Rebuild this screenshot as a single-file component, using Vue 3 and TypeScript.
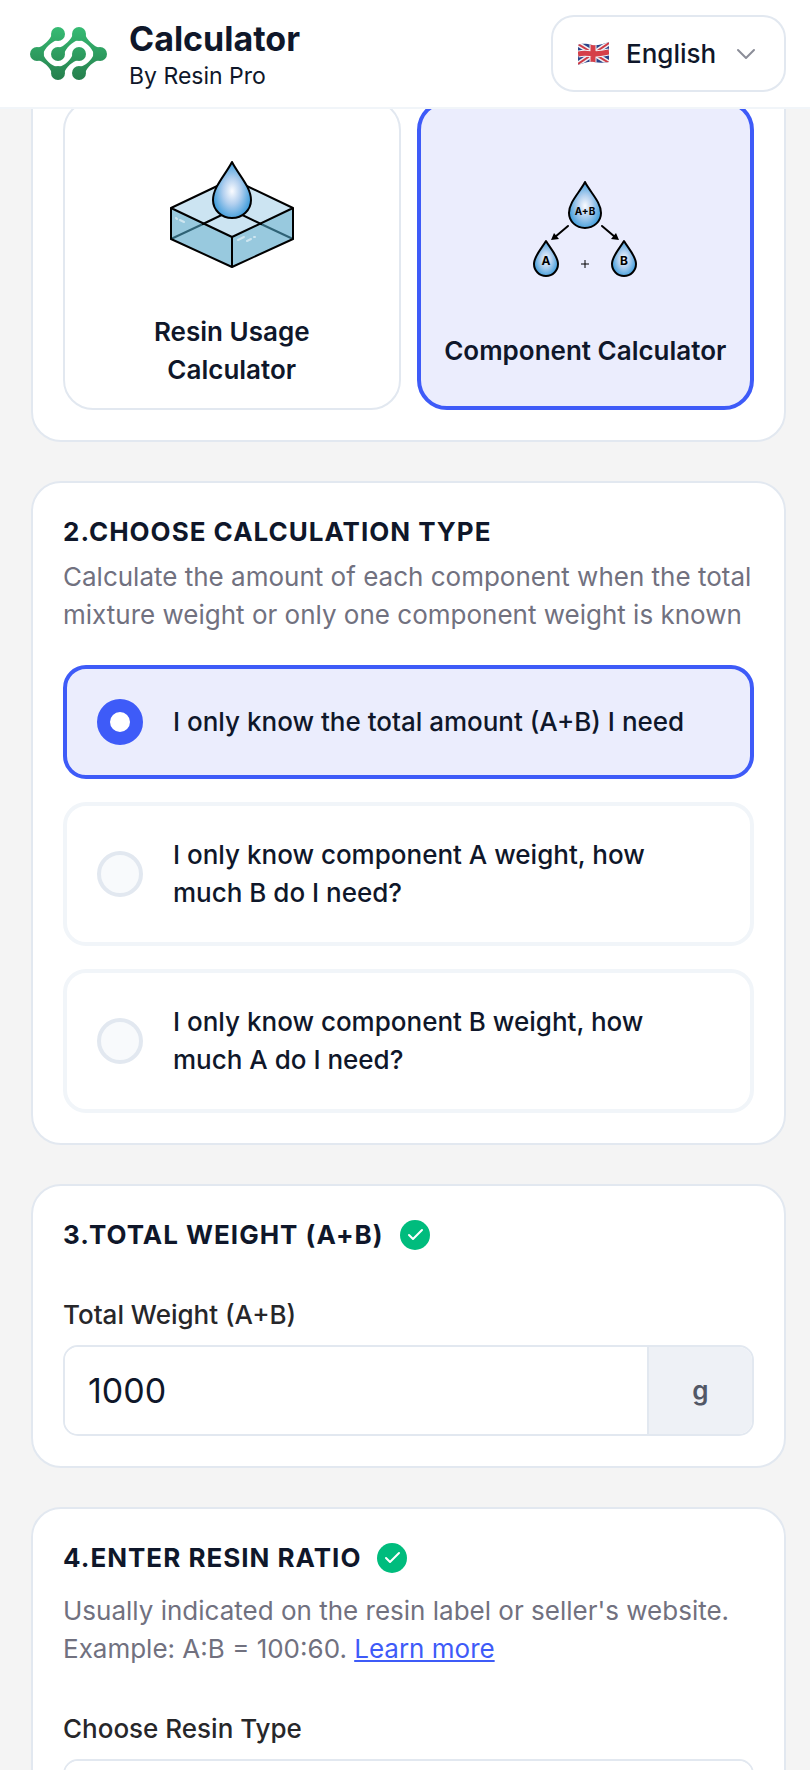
<script setup lang="ts">
import { ref } from 'vue'

type Point = [number, number]

interface CalculationType {
  id: string
  label: string
}

const language = ref('en')
const tool = ref<'usage' | 'component'>('component')
const calculation = ref('total')
const totalWeight = ref('1000')
const resinType = ref('')

const calculationTypes: CalculationType[] = [
  { id: 'total', label: 'I only know the total amount (A+B) I need' },
  { id: 'a', label: 'I only know component A weight, how much B do I need?' },
  { id: 'b', label: 'I only know component B weight, how much A do I need?' },
]

const nodes: Point[] = [
  [28, 7], [49, 7], [7, 27], [28, 27], [49, 27], [70, 27], [28, 46], [49, 46],
]
const links: [number, number][] = [[2, 0], [2, 6], [3, 1], [1, 5], [5, 7], [6, 4]]

// A link is wide where it meets its nodes and thin halfway.
function linkPath([from, to]: [number, number]): string {
  const [x1, y1] = nodes[from]
  const [x2, y2] = nodes[to]
  const length = Math.hypot(x2 - x1, y2 - y1)
  const dx = (x2 - x1) / length
  const dy = (y2 - y1) / length
  const at = (t: number, side: number) =>
    `${(x1 + dx * t - dy * side).toFixed(1)} ${(y1 + dy * t + dx * side).toFixed(1)}`
  return (
    `M${at(5, 4)} C${at(9, 1.2)} ${at(length - 9, 1.2)} ${at(length - 5, 4)} ` +
    `L${at(length - 5, -4)} C${at(length - 9, -1.2)} ${at(9, -1.2)} ${at(5, -4)}Z`
  )
}
</script>

<template>
  <div class="page">
    <header class="header">
      <a class="brand" href="#">
        <svg class="logo" viewBox="0 0 77 53" aria-hidden="true">
          <defs>
            <linearGradient id="logo-fill" gradientUnits="userSpaceOnUse" x1="0" y1="0" x2="0" y2="53">
              <stop offset="0" stop-color="#36bb73" />
              <stop offset="1" stop-color="#267f4d" />
            </linearGradient>
          </defs>
          <g fill="url(#logo-fill)">
            <path v-for="(link, i) in links" :key="`l${i}`" :d="linkPath(link)" />
            <circle v-for="(node, i) in nodes" :key="`n${i}`" :cx="node[0]" :cy="node[1]" r="7" />
          </g>
        </svg>
        <span class="brand-text">
          <span class="brand-name">Calculator</span>
          <span class="brand-by">By Resin Pro</span>
        </span>
      </a>
      <div class="language">
        <svg class="flag" viewBox="0 0 31 24" aria-hidden="true">
          <defs>
            <clipPath id="flag-shape">
              <path d="M0 3C5 1 9 2 14 3S25 2 31 0V20C26 21 21 21 16 20S6 21 0 23Z" />
            </clipPath>
          </defs>
          <g clip-path="url(#flag-shape)">
            <path fill="#2b4389" d="M0 0H31V24H0Z" />
            <path stroke="#f0eff3" stroke-width="5" d="M0 2 31 21M0 22 31 1" />
            <path stroke="#cf3b46" stroke-width="2" d="M0 2 31 21M0 22 31 1" />
            <path fill="none" stroke="#f0eff3" stroke-width="7" d="M0 12C8 10 12 12 16 12S25 11 31 10M15 0V24" />
            <path fill="none" stroke="#d53f49" stroke-width="5" d="M0 12C8 10 12 12 16 12S25 11 31 10M15 0V24" />
          </g>
        </svg>
        <select v-model="language" class="language-select" aria-label="Language">
          <option value="en">English</option>
        </select>
        <svg class="chevron" viewBox="0 0 20 12" aria-hidden="true">
          <path d="M2 2 10 10 18 2" />
        </svg>
      </div>
    </header>

    <main class="content">
      <section class="card tools">
        <button
          type="button"
          class="tool"
          :class="{ selected: tool === 'usage' }"
          :aria-pressed="tool === 'usage'"
          @click="tool = 'usage'"
        >
          <svg class="tool-art" viewBox="0 0 184 184" aria-hidden="true">
            <defs>
              <radialGradient id="drop-fill" cx="0.5" cy="0.52" r="0.52">
                <stop offset="0" stop-color="#fbfcff" />
                <stop offset="0.45" stop-color="#b3d0ef" />
                <stop offset="1" stop-color="#3f9ddb" />
              </radialGradient>
            </defs>
            <path fill="#cce4f2" d="M31 87 92 58 153 87 92 116Z" />
            <path fill="#98c9de" d="M31 87 92 116V146L31 118ZM153 87 92 116V146L153 118Z" />
            <path class="edge hidden-edge" d="M31 118 63 103M153 118 121 103" />
            <path class="edge" d="M63 103 92 89 121 103" />
            <path class="edge" d="M31 87 92 58 153 87V118L92 146 31 118V87L92 116 153 87M92 116V146" />
            <path class="shine" d="M36 97 37 98M40 99 44 101M98 119 104 116M107 120 111 118M114 116 115 116" />
            <path class="edge" fill="url(#drop-fill)" d="M92 41C98 53 111 66 111 79A19 18 0 0 1 73 79C73 66 86 53 92 41Z" />
          </svg>
          <span>Resin Usage Calculator</span>
        </button>
        <button
          type="button"
          class="tool"
          :class="{ selected: tool === 'component' }"
          :aria-pressed="tool === 'component'"
          @click="tool = 'component'"
        >
          <svg class="tool-art" viewBox="0 0 184 184" aria-hidden="true">
            <g class="edge">
              <path fill="url(#drop-fill)" d="M92 42C97 52 108 62 108 73A16 15 0 0 1 76 73C76 62 87 52 92 42Z" />
              <path fill="url(#drop-fill)" d="M53 101C57 108 65 116 65 124A12 12 0 0 1 41 124C41 116 49 108 53 101Z" />
              <path fill="url(#drop-fill)" d="M131 101C135 108 143 116 143 124A12 12 0 0 1 119 124C119 116 127 108 131 101Z" />
            </g>
            <path class="edge" d="M75 86 62 97M109 86 122 97" />
            <path class="plus" d="M88 124H96M92 120V128" />
            <path d="M58 100 61 93 66 99ZM126 100 123 93 118 99Z" />
            <text x="92" y="75" font-size="10">A+B</text>
            <text x="53" y="125" font-size="12">A</text>
            <text x="131" y="125" font-size="12">B</text>
          </svg>
          <span>Component Calculator</span>
        </button>
      </section>

      <section class="card">
        <h2 class="title">2.CHOOSE CALCULATION TYPE</h2>
        <p class="description">
          Calculate the amount of each component when the total mixture weight or only one component weight is known
        </p>
        <div class="options" role="radiogroup" aria-label="Calculation type">
          <label
            v-for="item in calculationTypes"
            :key="item.id"
            class="option"
            :class="{ selected: calculation === item.id }"
          >
            <input v-model="calculation" class="radio" type="radio" name="calculation" :value="item.id" />
            <span>{{ item.label }}</span>
          </label>
        </div>
      </section>

      <section class="card">
        <h2 class="title">
          3.TOTAL WEIGHT (A+B)
          <svg class="done" viewBox="0 0 30 30" aria-hidden="true">
            <circle cx="15" cy="15" r="15" />
            <path d="M9 15 13 19 22 10" />
          </svg>
        </h2>
        <label class="field-label" for="total-weight">Total Weight (A+B)</label>
        <div class="field">
          <input id="total-weight" v-model="totalWeight" class="field-input" type="text" inputmode="decimal" />
          <span class="unit">g</span>
        </div>
      </section>

      <section class="card">
        <h2 class="title">
          4.ENTER RESIN RATIO
          <svg class="done" viewBox="0 0 30 30" aria-hidden="true">
            <circle cx="15" cy="15" r="15" />
            <path d="M9 15 13 19 22 10" />
          </svg>
        </h2>
        <p class="description spaced">
          Usually indicated on the resin label or seller's website. Example: A:B = 100:60.
          <a class="link" href="#">Learn more</a>
        </p>
        <label class="field-label" for="resin-type">Choose Resin Type</label>
        <div class="field">
          <select id="resin-type" v-model="resinType" class="field-input"></select>
        </div>
      </section>
    </main>
  </div>
</template>

<style>
body {
  margin: 0;
  background: #f4f4f4;
}
</style>

<style scoped>
.page {
  height: 100vh;
  overflow-y: auto;
  scrollbar-width: none;
  background: #f4f4f4;
  color: #0f172a;
  font-family: Inter, "Liberation Sans", sans-serif;
  font-size: 26px;
  line-height: 38px;
}

.page *,
.page {
  box-sizing: border-box;
}

button,
select,
input {
  margin: 0;
  color: inherit;
  font: inherit;
}

.header {
  position: sticky;
  top: 0;
  z-index: 1;
  display: flex;
  align-items: center;
  justify-content: space-between;
  padding: 15px 24px 15px 30px;
  border-bottom: 2px solid #f1f5f9;
  background: #fff;
}

.brand {
  display: flex;
  align-items: center;
  gap: 22px;
  color: inherit;
  text-decoration: none;
}

.logo {
  width: 77px;
  height: 53px;
}

.brand-text {
  display: flex;
  flex-direction: column;
  padding-top: 2px;
}

.brand-name {
  font-size: 34px;
  font-weight: 700;
  line-height: 42px;
}

.brand-by {
  font-size: 23px;
  line-height: 32px;
}

.language {
  display: flex;
  align-items: center;
  width: 235px;
  height: 77px;
  padding: 0 28px 0 25px;
  border: 2px solid #e2e8f0;
  border-radius: 23px;
}

.flag {
  flex: none;
  width: 31px;
  height: 24px;
}

.language-select {
  flex: 1;
  min-width: 0;
  padding: 0 0 0 17px;
  border: 0;
  background: none;
  appearance: none;
  font-weight: 500;
}

.chevron {
  flex: none;
  width: 20px;
  height: 12px;
  fill: none;
  stroke: #8b8d98;
  stroke-width: 2;
  stroke-linecap: round;
  stroke-linejoin: round;
}

.content {
  display: flex;
  flex-direction: column;
  gap: 39px;
  margin-top: -41px;
  padding: 0 24px 39px 31px;
}

.card {
  padding: 30px;
  border: 2px solid #e2e8f0;
  border-radius: 30px;
  background: #fff;
}

.tools {
  display: grid;
  grid-template-columns: 1fr 1fr;
  gap: 16px;
}

.tool {
  display: flex;
  flex-direction: column;
  align-items: center;
  justify-content: center;
  gap: 8px;
  min-height: 310px;
  padding: 16px;
  border: 2px solid #e2e8f0;
  border-radius: 30px;
  background: #fff;
  font-weight: 600;
  text-align: center;
}

.tool.selected {
  border: 4px solid #3e5bf8;
  background: #ebedfd;
}

.tool span {
  max-width: 290px;
}

.tool-art {
  width: 184px;
  height: 184px;
  flex: none;
}

.tool-art text {
  font-weight: 700;
  text-anchor: middle;
}

.edge {
  stroke: #000;
  stroke-width: 2;
  stroke-linecap: round;
  stroke-linejoin: round;
}

path.edge:not([fill]) {
  fill: none;
}

.plus {
  stroke: #000;
  stroke-width: 1;
}

.hidden-edge {
  stroke: #2f6275;
}

.shine {
  stroke: #cfe6f0;
  stroke-width: 2;
  stroke-linecap: round;
}

.title {
  display: flex;
  align-items: center;
  gap: 16px;
  margin: 0;
  font-size: 26px;
  font-weight: 700;
  letter-spacing: 1px;
  line-height: 38px;
}

.done {
  flex: none;
  width: 30px;
  height: 30px;
  fill: #00bc7d;
}

.done path {
  fill: none;
  stroke: #fff;
  stroke-width: 2;
  stroke-linecap: round;
  stroke-linejoin: round;
}

.description {
  margin: 7px 0 0;
  color: #71717f;
}

.description.spaced {
  margin-top: 15px;
}

.link {
  color: #3e5bf8;
}

.options {
  display: flex;
  flex-direction: column;
  gap: 23px;
  margin-top: 31px;
}

.option {
  display: flex;
  align-items: center;
  gap: 30px;
  padding: 30px 42px 30px 30px;
  border: 4px solid #f1f5f9;
  border-radius: 23px;
  font-weight: 500;
}

.option.selected {
  border-color: #3e5bf8;
  background: #ebedfd;
}

.radio {
  flex: none;
  width: 46px;
  height: 46px;
  border: 4px solid #e2e8f0;
  border-radius: 50%;
  background: #f8fafc;
  appearance: none;
}

.radio:checked {
  border: 13px solid #3e5bf8;
  background: #fff;
}

.field-label {
  display: block;
  margin-top: 42px;
  color: #27272a;
  font-weight: 500;
}

.field {
  display: flex;
  height: 91px;
  margin-top: 11px;
  overflow: hidden;
  border: 2px solid #e2e8f0;
  border-radius: 15px;
}

.field-input {
  flex: 1;
  min-width: 0;
  padding: 0 23px;
  border: 0;
  background: #fff;
  font-size: 34px;
  appearance: none;
}

.unit {
  display: flex;
  align-items: center;
  justify-content: center;
  width: 105px;
  border-left: 2px solid #e2e8f0;
  background: #eef1f6;
  color: #525866;
  font-weight: 600;
}
</style>
